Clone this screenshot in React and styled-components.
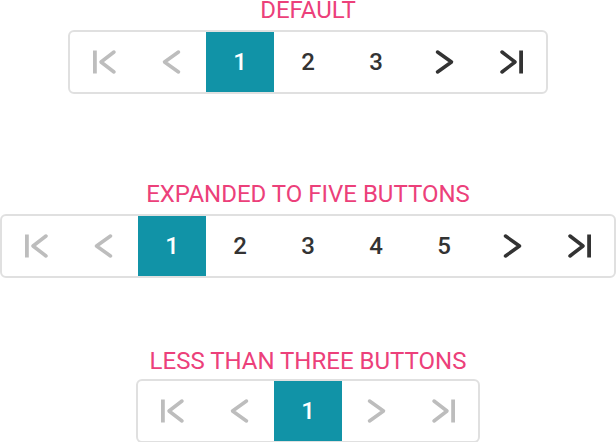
import styled, { createGlobalStyle } from 'styled-components';

const GlobalStyle = createGlobalStyle`
  html, body {
    margin: 0;
    padding: 0;
    background: #ffffff;
    font-family: Roboto, "Liberation Sans", sans-serif;
  }
`;

const Page = styled.div`
  width: 616px;
  height: 442px;
  display: flex;
  flex-direction: column;
  align-items: center;
`;

const Section = styled.section`
  display: flex;
  flex-direction: column;
  align-items: center;
  margin-top: ${(p) => p.$top || 0}px;
`;

const Title = styled.h2`
  margin: 0 0 ${(p) => (p.$gap != null ? p.$gap : 10)}px;
  font-size: 24px;
  line-height: 20px;
  font-weight: 400;
  color: #ec407a;
`;

const Pager = styled.nav`
  display: flex;
  border: 2px solid #e0e0e0;
  border-radius: 6px;
  overflow: hidden;
`;

const PageButton = styled.button`
  width: 68px;
  height: 60px;
  display: flex;
  align-items: center;
  justify-content: center;
  border: none;
  padding: 0;
  margin: 0;
  font-family: Roboto, "Liberation Sans", sans-serif;
  font-size: 24px;
  font-weight: 500;
  background: ${(p) => (p.$active ? '#1193a7' : 'transparent')};
  color: ${(p) => (p.$active ? '#ffffff' : p.$disabled ? '#bdbdbd' : '#333333')};
  cursor: ${(p) => (p.$disabled ? 'default' : 'pointer')};
`;

const Icon = ({ type }) => (
  <svg width="28" height="28" viewBox="0 0 28 28" fill="none" stroke="currentColor"
    strokeWidth="3.5" strokeLinecap="round" strokeLinejoin="round">
    {type === 'first' && (
      <>
        <rect x="3" y="2.5" width="3.8" height="23" fill="currentColor" stroke="none" />
        <path d="M24 4 L11 14 L24 24" />
      </>
    )}
    {type === 'prev' && <path d="M20.5 4 L6.5 14 L20.5 24" />}
    {type === 'next' && <path d="M7.5 4 L21.5 14 L7.5 24" />}
    {type === 'last' && (
      <>
        <path d="M4 4 L17 14 L4 24" />
        <rect x="21.2" y="2.5" width="3.8" height="23" fill="currentColor" stroke="none" />
      </>
    )}
  </svg>
);

const Pagination = ({ pages, current = 1 }) => {
  const atStart = current === 1;
  const atEnd = current === pages;
  const numbers = Array.from({ length: pages }, (_, i) => i + 1);
  return (
    <Pager>
      <PageButton $disabled={atStart}><Icon type="first" /></PageButton>
      <PageButton $disabled={atStart}><Icon type="prev" /></PageButton>
      {numbers.map((n) => (
        <PageButton key={n} $active={n === current}>{n}</PageButton>
      ))}
      <PageButton $disabled={atEnd}><Icon type="next" /></PageButton>
      <PageButton $disabled={atEnd}><Icon type="last" /></PageButton>
    </Pager>
  );
};

export default function App() {
  return (
    <>
      <GlobalStyle />
      <Page>
        <Section>
          <Title>DEFAULT</Title>
          <Pagination pages={3} />
        </Section>
        <Section $top={90}>
          <Title>EXPANDED TO FIVE BUTTONS</Title>
          <Pagination pages={5} />
        </Section>
        <Section $top={73}>
          <Title $gap={8}>LESS THAN THREE BUTTONS</Title>
          <Pagination pages={1} />
        </Section>
      </Page>
    </>
  );
}
